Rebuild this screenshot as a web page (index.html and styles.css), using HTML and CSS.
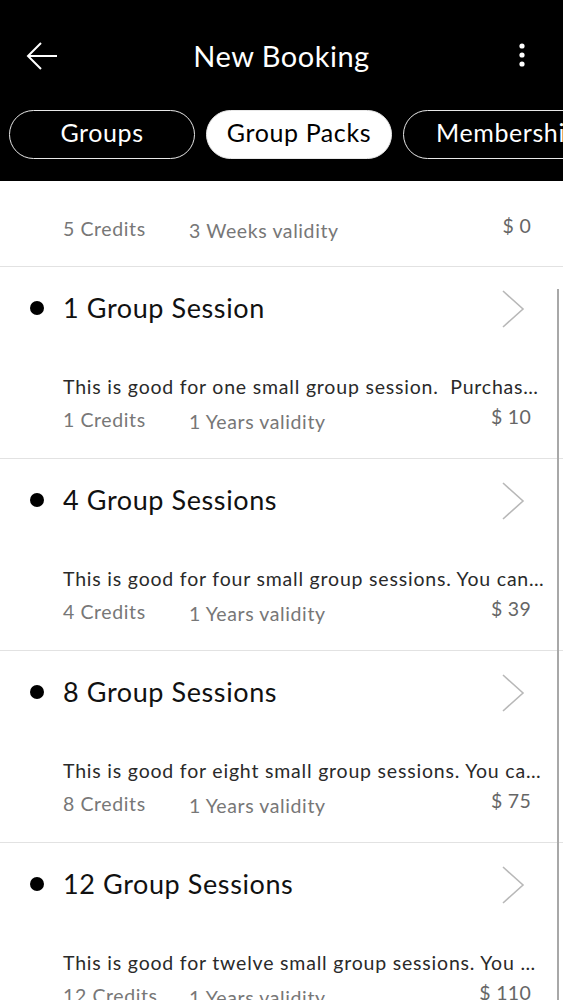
FILE: index.html
```html
<!DOCTYPE html>
<html>
<head>
<meta charset="utf-8">
<link rel="stylesheet" href="styles.css">
</head>
<body>
<div class="screen">
  <header class="header">
    <div class="topbar">
      <svg class="back" width="34" height="30" viewBox="0 0 34 30"><path d="M32 15H3M16 2L3 15l13 13" fill="none" stroke="#fff" stroke-width="2"/></svg>
      <div class="title">New Booking</div>
      <svg class="kebab" width="8" height="24" viewBox="0 0 8 24"><circle cx="4" cy="3" r="2.6" fill="#fff"/><circle cx="4" cy="12" r="2.6" fill="#fff"/><circle cx="4" cy="21" r="2.6" fill="#fff"/></svg>
    </div>
    <div class="tabs">
      <div class="tab">Groups</div>
      <div class="tab active">Group Packs</div>
      <div class="tab">Memberships</div>
    </div>
  </header>
  <main class="list">
    <div class="item partial">
      <div class="meta">
        <span class="credits">5 Credits</span>
        <span class="validity">3 Weeks validity</span>
        <span class="price">$ 0</span>
      </div>
    </div>
    <div class="item">
      <div class="head"><span class="dot"></span><span class="name">1 Group Session</span>
        <svg class="chev" width="24" height="38" viewBox="0 0 24 38"><path d="M2 1l20 18L2 37" fill="none" stroke="#b8b8b8" stroke-width="1.6"/></svg></div>
      <div class="desc">This is good for one small group session.&nbsp; Purchase this pack to book a session.</div>
      <div class="meta"><span class="credits">1 Credits</span><span class="validity">1 Years validity</span><span class="price">$ 10</span></div>
    </div>
    <div class="item">
      <div class="head"><span class="dot"></span><span class="name">4 Group Sessions</span>
        <svg class="chev" width="24" height="38" viewBox="0 0 24 38"><path d="M2 1l20 18L2 37" fill="none" stroke="#b8b8b8" stroke-width="1.6"/></svg></div>
      <div class="desc">This is good for four small group sessions. You can book any time.</div>
      <div class="meta"><span class="credits">4 Credits</span><span class="validity">1 Years validity</span><span class="price">$ 39</span></div>
    </div>
    <div class="item">
      <div class="head"><span class="dot"></span><span class="name">8 Group Sessions</span>
        <svg class="chev" width="24" height="38" viewBox="0 0 24 38"><path d="M2 1l20 18L2 37" fill="none" stroke="#b8b8b8" stroke-width="1.6"/></svg></div>
      <div class="desc">This is good for eight small group sessions. You can book any time.</div>
      <div class="meta"><span class="credits">8 Credits</span><span class="validity">1 Years validity</span><span class="price">$ 75</span></div>
    </div>
    <div class="item">
      <div class="head"><span class="dot"></span><span class="name">12 Group Sessions</span>
        <svg class="chev" width="24" height="38" viewBox="0 0 24 38"><path d="M2 1l20 18L2 37" fill="none" stroke="#b8b8b8" stroke-width="1.6"/></svg></div>
      <div class="desc">This is good for twelve small group sessions. You can book any time.</div>
      <div class="meta"><span class="credits">12 Credits</span><span class="validity">1 Years validity</span><span class="price">$ 110</span></div>
    </div>
    <div class="scrollbar"></div>
  </main>
</div>
</body>
</html>
```
FILE: styles.css
```css
html, body {
  margin: 0;
  padding: 0;
  background: #fff;
}
.screen {
  width: 563px;
  height: 1000px;
  overflow: hidden;
  font-family: Lato, "Noto Sans", sans-serif;
}
.header {
  background: #000;
  height: 181px;
  box-sizing: border-box;
}
.topbar {
  height: 110px;
  display: flex;
  align-items: center;
  justify-content: space-between;
  padding: 0 37px 0 25px;
  position: relative;
}
.back { display: block; margin-top: 1px; }
.kebab { display: block; margin-top: 0; }
.title {
  position: absolute;
  left: 0;
  right: 0;
  text-align: center;
  color: #fff;
  font-size: 29px;
  font-weight: 400;
  letter-spacing: 0.5px;
  pointer-events: none;
}
.tabs {
  display: flex;
  gap: 11px;
  padding-left: 9px;
  white-space: nowrap;
}
.tab {
  flex: none;
  width: 186px;
  height: 49px;
  box-sizing: border-box;
  border: 1.5px solid #e8e8e8;
  border-radius: 25px;
  color: #fff;
  font-size: 25px;
  letter-spacing: 0.6px;
  display: flex;
  align-items: center;
  justify-content: center;
  padding-bottom: 5px;
}
.tab.active {
  background: #fff;
  color: #000;
}
.tab:last-child {
  justify-content: flex-start;
  padding-left: 32px;
  width: 220px;
}
.list {
  position: relative;
  height: 819px;
  overflow: hidden;
}
.item {
  border-bottom: 1px solid #e2e2e2;
  padding: 24px 0 24px 0;
  height: 192px;
  box-sizing: border-box;
}
.item.partial {
  height: 86px;
  padding-top: 34px;
}
.head {
  display: flex;
  align-items: center;
  height: 32px;
  padding-left: 30px;
  padding-right: 38px;
}
.dot {
  width: 14px;
  height: 14px;
  border-radius: 50%;
  background: #000;
  flex: none;
  margin-right: 19px;
  margin-top: 2px;
}
.name {
  flex: 1;
  font-size: 27px;
  color: #111;
  letter-spacing: 0.6px;
}
.chev { display: block; margin-top: 4px; }
.desc {
  margin-top: 51px;
  padding-left: 63px;
  padding-right: 18px;
  font-size: 19.5px;
  letter-spacing: 0.8px;
  line-height: 26px;
  color: #2a2a2a;
  white-space: nowrap;
  overflow: hidden;
  text-overflow: ellipsis;
}
.meta {
  margin-top: 6px;
  display: flex;
  align-items: center;
  height: 26px;
  padding-left: 63px;
  padding-right: 32px;
  font-size: 19.5px;
  letter-spacing: 0.6px;
  color: #777;
}
.credits { width: 126px; flex: none; }
.validity { flex: 1; padding-top: 4px; }
.price { color: #666; margin-top: -6px; letter-spacing: 0.3px; }
.item.partial .meta { margin-top: 0; }
.scrollbar {
  position: absolute;
  right: 4px;
  top: 108px;
  width: 2px;
  height: 720px;
  background: #a8a8a8;
}
```
